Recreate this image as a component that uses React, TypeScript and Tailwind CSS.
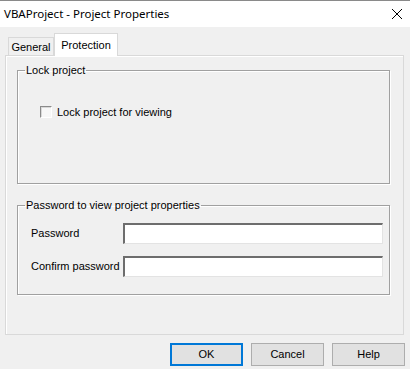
import React from 'react';

function Sunken({ className = '' }: { className?: string }) {
  return (
    <div
      className={`bg-white border-t-2 border-l-2 border-t-[#6d6d6d] border-l-[#6d6d6d] border-b border-r border-b-[#e3e3e3] border-r-[#e3e3e3] ${className}`}
    />
  );
}

function WinButton({ label, focused = false }: { label: string; focused?: boolean }) {
  return (
    <button
      className={`w-[73px] h-[23px] bg-[#e1e1e1] text-[11px] text-black flex items-center justify-center ${
        focused ? 'border-2 border-[#0078d7]' : 'border border-[#adadad]'
      }`}
    >
      {label}
    </button>
  );
}

export default function App() {
  return (
    <div className="w-[410px] h-[369px] bg-[#f0f0f0] flex flex-col text-[11px] text-black font-['Liberation_Sans',sans-serif] border-t border-[#8a8a8a] overflow-hidden">
      {/* Title bar */}
      <div className="h-[26px] bg-white flex items-center justify-between pl-[4px] pr-[7px] shrink-0">
        <span className="text-[11.5px] font-['Noto_Sans',sans-serif] text-black">VBAProject - Project Properties</span>
        <svg width="12" height="12" viewBox="0 0 12 12" className="text-black">
          <path d="M1 1 L11 11 M11 1 L1 11" stroke="currentColor" strokeWidth="1" />
        </svg>
      </div>

      {/* Tabs */}
      <div className="flex items-end pl-[8px] pt-[6px] h-[28px] shrink-0 relative z-10">
        <div className="w-[46px] h-[18px] border border-b-0 border-[#d9d9d9] bg-[#f0f0f0] flex items-center justify-center pt-[2px]">
          General
        </div>
        <div className="w-[64px] h-[23px] border border-b-0 border-[#d9d9d9] bg-white flex items-center justify-center -mb-px">
          Protection
        </div>
      </div>

      {/* Tab panel */}
      <div className="ml-[5px] mr-[6px] h-[280px] border border-[#d9d9d9] shadow-[inset_1px_1px_0_#ffffff] bg-[#f0f0f0] pl-[11px] pr-[13px] pt-[7px] flex flex-col shrink-0">
        <fieldset className="border border-[#a0a0a0] shadow-[1px_1px_0_#ffffff,inset_1px_1px_0_#ffffff] h-[121px]">
          <legend className="ml-[7px] px-[1px] leading-[14px]">Lock project</legend>
          <div className="pl-[22px] pt-[27px]">
            <label className="flex items-center gap-[5px]">
              <span className="w-[12px] h-[12px] bg-[#f7f7f7] border-t border-l border-t-[#8a8a8a] border-l-[#8a8a8a] border-b border-r border-b-white border-r-white shadow-[inset_1px_1px_0_#d8d8d8]" />
              Lock project for viewing
            </label>
          </div>
        </fieldset>

        <fieldset className="mt-[14px] border border-[#a0a0a0] shadow-[1px_1px_0_#ffffff,inset_1px_1px_0_#ffffff] h-[97px]">
          <legend className="ml-[7px] px-[1px] leading-[14px]">Password to view project properties</legend>
          <div className="pl-[13px] pr-[6px] pt-[11px]">
            <div className="flex items-center h-[21px]">
              <span className="w-[92px]">Password</span>
              <Sunken className="flex-1 h-[21px]" />
            </div>
            <div className="flex items-center h-[21px] mt-[12px]">
              <span className="w-[92px] whitespace-nowrap">Confirm password</span>
              <Sunken className="flex-1 h-[21px]" />
            </div>
          </div>
        </fieldset>
      </div>

      {/* Buttons */}
      <div className="flex justify-end gap-[8px] pr-[5px] pt-[8px]">
        <WinButton label="OK" focused />
        <WinButton label="Cancel" />
        <WinButton label="Help" />
      </div>
    </div>
  );
}
